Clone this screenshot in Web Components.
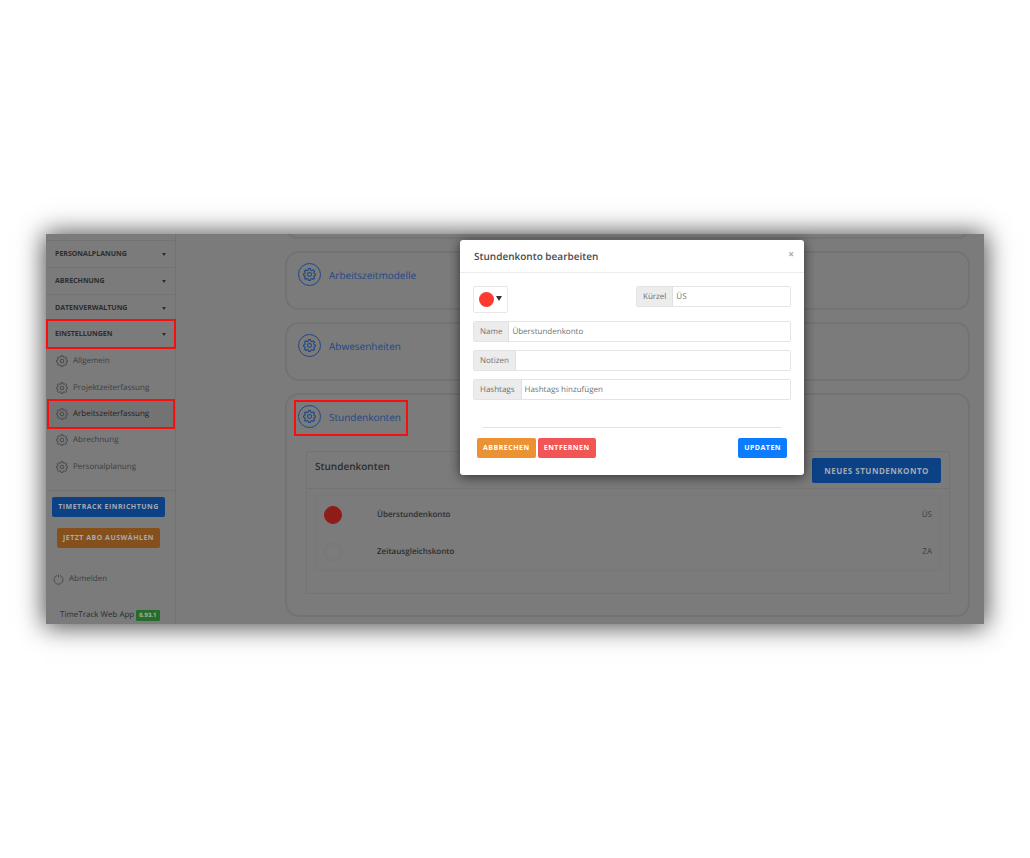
<!DOCTYPE html>
<html lang="de">
  <head>
    <meta charset="utf-8" />
    <meta name="viewport" content="width=device-width, initial-scale=1" />
    <title>TimeTrack - Stundenkonten</title>
    <style>
      :root {
        --surface: #7b7b7b;
        --line: #737373;
        --text: #2b2d2f;
        --muted: #3c3d3f;
        --blue-dim: #0c4186;
        --link: #1f4886;
        --mark: #fb0d0d;
      }
      body {
        margin: 0;
        background: #fff;
        color: var(--text);
        font: 8px/12px "Open Sans", "Noto Sans", sans-serif;
        text-rendering: geometricPrecision;
      }
    </style>
  </head>
  <body>
    <app-window>
      <side-bar slot="side">
        <menu-group>Personalplanung</menu-group>
        <menu-group>Abrechnung</menu-group>
        <menu-group>Datenverwaltung</menu-group>
        <menu-group marked>Einstellungen</menu-group>
        <menu-item slot="items">Allgemein</menu-item>
        <menu-item slot="items">Projektzeiterfassung</menu-item>
        <menu-item slot="items" active>Arbeitszeiterfassung</menu-item>
        <menu-item slot="items">Abrechnung</menu-item>
        <menu-item slot="items">Personalplanung</menu-item>
      </side-bar>
      <settings-card></settings-card>
      <settings-card heading="Arbeitszeitmodelle"></settings-card>
      <settings-card heading="Abwesenheiten"></settings-card>
      <settings-card heading="Stundenkonten" marked>
        <account-panel></account-panel>
      </settings-card>
      <edit-dialog slot="dialog"></edit-dialog>
    </app-window>

    <script>
      const css = String.raw
      const html = String.raw

      const gear = html`
        <svg viewBox="0 0 24 24" fill="none" stroke="currentColor" stroke-linejoin="round" aria-hidden="true">
          <path
            d="M10.2 1.2h3.6l.6 2.8 2.1.9 2.4-1.6 2.5 2.5-1.6 2.4.9 2.1 2.3.6v2.6l-2.3.6-.9 2.1 1.6 2.4-2.5 2.5-2.4-1.6-2.1.9-.6 2.4h-3.6l-.6-2.4-2.1-.9-2.4 1.6-2.5-2.5 1.6-2.4-.9-2.1-2.3-.6v-2.6l2.3-.6.9-2.1-1.6-2.4 2.5-2.5 2.4 1.6 2.1-.9z"
          />
          <circle cx="12" cy="12" r="3.6" />
        </svg>
      `

      class Base extends HTMLElement {
        constructor() {
          super()
          this.attachShadow({ mode: "open" })
        }
        connectedCallback() {
          this.shadowRoot.innerHTML = html`
            <style>
              * {
                box-sizing: border-box;
              }
              ${this.styles()}
            </style>
            ${this.markup()}
          `
        }
      }

      class AppWindow extends Base {
        styles() {
          return css`
            :host {
              display: block;
              position: relative;
              margin: 234px 46px;
              background: var(--surface);
              box-shadow: 0 1px 24px 2px rgba(0, 0, 0, 0.7);
            }
            .layout {
              display: grid;
              grid-template-columns: 130px minmax(0, 1fr);
              overflow: hidden;
            }
            main {
              display: flex;
              flex-direction: column;
              gap: 12px;
              padding: 0 14px 7px 109px;
            }
          `
        }
        markup() {
          return html`
            <div class="layout">
              <slot name="side"></slot>
              <main><slot></slot></main>
            </div>
            <slot name="dialog"></slot>
          `
        }
      }
      customElements.define("app-window", AppWindow)

      class SideBar extends Base {
        styles() {
          return css`
            :host {
              display: block;
              box-sizing: border-box;
              height: 0;
              min-height: 100%;
              border-right: 1px solid var(--line);
            }
            nav {
              padding-top: 6px;
            }
            .items {
              display: grid;
              grid-auto-rows: 1fr;
              height: 132px;
              margin-bottom: 10px;
            }
            .foot {
              display: flex;
              flex-direction: column;
              align-items: center;
              gap: 11px;
              padding: 6px 5px 0;
              border-top: 1px solid var(--line);
            }
            .foot action-button {
              margin-right: 4px;
            }
            a {
              display: flex;
              align-items: center;
              gap: 5px;
              padding: 0 7px;
              margin-top: 25px;
              color: var(--muted);
              text-decoration: none;
            }
            a svg {
              width: 11px;
              height: 11px;
              color: #4c4c4c;
            }
            .version {
              margin: 24px 0 0;
              padding-left: 14px;
              white-space: nowrap;
            }
            b {
              display: inline-block;
              padding: 0 3px;
              border-radius: 1px;
              background: #276c2b;
              color: #a9b5a9;
              font-size: 6px;
              line-height: 11px;
            }
          `
        }
        markup() {
          return html`
            <nav>
              <slot></slot>
              <div class="items"><slot name="items"></slot></div>
            </nav>
            <div class="foot">
              <action-button tone="blue-dim">Timetrack Einrichtung</action-button>
              <action-button tone="orange-dim">Jetzt Abo auswählen</action-button>
            </div>
            <a href="#abmelden">
              <svg viewBox="0 0 22 22" fill="none" stroke="currentColor" stroke-width="2" aria-hidden="true">
                <path d="M8 3a9 9 0 1 0 6 0M11 1v6" />
              </svg>
              Abmelden
            </a>
            <p class="version">TimeTrack Web App <b>6.93.1</b></p>
          `
        }
      }
      customElements.define("side-bar", SideBar)

      class MenuGroup extends Base {
        styles() {
          return css`
            :host {
              display: block;
              border-top: 1px solid var(--line);
            }
            :host([marked]) {
              position: relative;
              margin: -2px -1px -1px 0;
              padding-right: 1px;
              border: 2px solid var(--mark);
              border-width: 2px 0;
              box-shadow:
                inset 2px 0 var(--mark),
                inset -2px 0 var(--mark);
            }
            button {
              display: flex;
              align-items: center;
              justify-content: space-between;
              width: 100%;
              height: 26px;
              padding: 0 9px;
              border: 0;
              background: none;
              color: inherit;
              font: bold 7px/12px "Open Sans", sans-serif;
              text-transform: uppercase;
            }
            i {
              border: 2px solid transparent;
              border-top: 3px solid currentColor;
              border-bottom: 0;
            }
          `
        }
        markup() {
          return html`<button type="button"><slot></slot><i></i></button>`
        }
      }
      customElements.define("menu-group", MenuGroup)

      class MenuItem extends Base {
        styles() {
          return css`
            :host {
              display: grid;
            }
            a {
              display: flex;
              align-items: center;
              gap: 5px;
              margin: 0 2px 0 3px;
              padding: 0 7px;
              color: var(--muted);
              text-decoration: none;
            }
            :host([active]) a {
              outline: 2px solid var(--mark);
              background: #737373;
              color: #202122;
            }
            svg {
              width: 12px;
              height: 12px;
              color: #464748;
              stroke-width: 2;
            }
          `
        }
        markup() {
          return html`<a href="#menu">${gear}<span><slot></slot></span></a>`
        }
      }
      customElements.define("menu-item", MenuItem)

      class ActionButton extends Base {
        styles() {
          return css`
            :host {
              display: block;
            }
            button {
              height: 20px;
              padding: 0 6px;
              border: 0;
              border-radius: 2px;
              background: #0b7bff;
              color: #fff;
              font: bold 7px/20px "Open Sans", sans-serif;
              letter-spacing: 0.5px;
              text-transform: uppercase;
              white-space: nowrap;
            }
            :host([tone="orange"]) button {
              background: #ea9234;
            }
            :host([tone="red"]) button {
              background: #f25555;
            }
            :host([tone$="dim"]) button {
              color: #a5aab0;
            }
            :host([tone="blue-dim"]) button {
              background: var(--blue-dim);
            }
            :host([tone="orange-dim"]) button {
              background: #86501c;
            }
            :host([large]) button {
              height: 25px;
              padding: 0 12px;
              font-size: 8px;
            }
          `
        }
        markup() {
          return html`<button type="button"><slot></slot></button>`
        }
      }
      customElements.define("action-button", ActionButton)

      class SettingsCard extends Base {
        styles() {
          return css`
            :host {
              display: block;
              box-sizing: border-box;
              min-height: 59px;
              padding: 10px 11px 11px;
              border: 2px solid #737373;
              border-radius: 14px;
            }
            :host(:not([heading])) {
              min-height: 0;
              height: 25px;
              margin-top: -20px;
              padding: 0;
            }
            h2 {
              display: flex;
              align-items: center;
              gap: 8px;
              width: max-content;
              margin: 0;
              color: var(--link);
              font-size: 10px;
              font-weight: 400;
              line-height: 20px;
            }
            :host([marked]) h2 {
              margin: -3px -2px -6px;
              padding: 3px 5px 6px 2px;
              outline: 2px solid var(--mark);
            }
            .ring {
              display: grid;
              place-items: center;
              width: 23px;
              height: 23px;
              border: 1px solid;
              border-radius: 50%;
            }
            svg {
              width: 13px;
              height: 13px;
              stroke-width: 2;
            }
          `
        }
        markup() {
          const heading = this.getAttribute("heading")
          if (!heading) return ""
          return html`
            <h2><span class="ring">${gear}</span>${heading}</h2>
            <slot></slot>
          `
        }
      }
      customElements.define("settings-card", SettingsCard)

      class AccountPanel extends Base {
        styles() {
          return css`
            :host {
              display: block;
              margin: 23px 7px 10px 8px;
              border: 1px solid var(--line);
              border-radius: 2px;
            }
            header {
              display: flex;
              justify-content: space-between;
              height: 37px;
              padding: 6px 8px;
              border-bottom: 1px solid var(--line);
            }
            h3 {
              margin: 0;
              font-size: 10px;
              font-weight: 600;
              line-height: 16px;
            }
            .list {
              margin: 6px 8px 22px;
              border: 1px solid #777;
              border-radius: 2px;
            }
            table {
              width: 100%;
              border-collapse: collapse;
            }
            td {
              height: 37px;
              padding: 0 8px;
            }
            td:first-child {
              width: 61px;
              padding-right: 0;
            }
            td:nth-child(2) {
              padding-left: 0;
              font-weight: 600;
            }
            td:last-child {
              text-align: right;
              color: var(--muted);
            }
            i {
              display: block;
              width: 18px;
              height: 18px;
              border: 1px solid #777;
              border-radius: 50%;
            }
            .red {
              border-color: #8e1c18;
              background: #8e1c18;
            }
          `
        }
        markup() {
          return html`
            <header>
              <h3>Stundenkonten</h3>
              <action-button tone="blue-dim" large>Neues Stundenkonto</action-button>
            </header>
            <div class="list">
              <table>
                <tr><td><i class="red"></i></td><td>Überstundenkonto</td><td>ÜS</td></tr>
                <tr><td><i></i></td><td>Zeitausgleichskonto</td><td>ZA</td></tr>
              </table>
            </div>
          `
        }
      }
      customElements.define("account-panel", AccountPanel)

      class FormField extends Base {
        styles() {
          return css`
            :host {
              display: flex;
              box-sizing: border-box;
              height: 21px;
              border: 1px solid #e4e4e4;
              border-radius: 2px;
              overflow: hidden;
            }
            label {
              padding: 0 6px;
              border-right: 1px solid #e0e0e0;
              background: #ececec;
              color: #6d7073;
              line-height: 20px;
            }
            input {
              flex: 1;
              min-width: 0;
              padding: 0 3px;
              border: 0;
              outline: 0;
              background: #fff;
              color: #707376;
              font: inherit;
              text-rendering: inherit;
            }
            input::placeholder {
              color: #707376;
            }
          `
        }
        markup() {
          return html`
            <label for="field">${this.getAttribute("label")}</label>
            <input
              id="field"
              type="text"
              value="${this.getAttribute("value") || ""}"
              placeholder="${this.getAttribute("placeholder") || ""}"
            />
          `
        }
      }
      customElements.define("form-field", FormField)

      class EditDialog extends Base {
        styles() {
          return css`
            :host {
              position: absolute;
              top: 6px;
              left: 414px;
              width: 344px;
              border-radius: 3px;
              background: #fff;
              box-shadow: 0 2px 12px rgba(0, 0, 0, 0.6);
            }
            header {
              display: flex;
              align-items: center;
              justify-content: space-between;
              height: 33px;
              padding: 0 9px 0 14px;
              border-bottom: 1px solid #ececec;
            }
            h2 {
              margin: 0;
              color: #4a4c4e;
              font-size: 10px;
              font-weight: 600;
            }
            .close {
              padding: 0 0 4px;
              width: 8px;
              border: 0;
              background: none;
              color: #aaa;
              font: bold 10px/12px "Open Sans", sans-serif;
            }
            form {
              display: grid;
              gap: 8px;
              padding: 13px 13px 17px;
            }
            .top {
              display: flex;
              align-items: flex-start;
              justify-content: space-between;
            }
            .top form-field {
              width: 155px;
            }
            .color {
              display: flex;
              align-items: center;
              gap: 2px;
              height: 27px;
              padding: 0 5px;
              border: 1px solid #e8e8e8;
              border-radius: 2px;
              background: #fff;
            }
            .dot {
              width: 15px;
              height: 15px;
              border-radius: 50%;
              background: #fe392f;
            }
            .arrow {
              margin-bottom: 3px;
              border: 3px solid transparent;
              border-top: 5px solid #333;
              border-bottom: 0;
            }
            footer {
              display: flex;
              gap: 2px;
              margin: 19px 4px 0;
              padding-top: 11px;
              position: relative;
            }
            footer::before {
              content: "";
              position: absolute;
              inset: 0 5px auto;
              border-top: 1px solid #e4e4e4;
            }
            footer :last-child {
              margin-left: auto;
            }
          `
        }
        markup() {
          return html`
            <section role="dialog" aria-label="Stundenkonto bearbeiten">
              <header>
                <h2>Stundenkonto bearbeiten</h2>
                <button class="close" type="button" aria-label="Schließen">×</button>
              </header>
              <form>
                <div class="top">
                  <button class="color" type="button" aria-label="Farbe">
                    <span class="dot"></span><span class="arrow"></span>
                  </button>
                  <form-field label="Kürzel" value="ÜS"></form-field>
                </div>
                <form-field label="Name" value="Überstundenkonto"></form-field>
                <form-field label="Notizen"></form-field>
                <form-field label="Hashtags" placeholder="Hashtags hinzufügen"></form-field>
                <footer>
                  <action-button tone="orange">Abbrechen</action-button>
                  <action-button tone="red">Entfernen</action-button>
                  <action-button>Updaten</action-button>
                </footer>
              </form>
            </section>
          `
        }
      }
      customElements.define("edit-dialog", EditDialog)
    </script>
  </body>
</html>
